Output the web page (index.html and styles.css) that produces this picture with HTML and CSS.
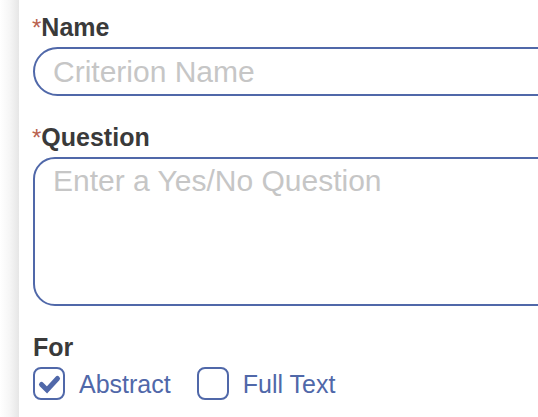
FILE: index.html
```html
<!DOCTYPE html>
<html lang="en">
<head>
<meta charset="utf-8">
<title>Criterion</title>
<link rel="stylesheet" href="styles.css">
</head>
<body>
<div class="page">
  <div class="edge"></div>
  <form class="panel">
    <label class="label" for="name"><span class="req">*</span>Name</label>
    <input id="name" class="input" type="text" placeholder="Criterion Name">

    <label class="label label-gap" for="question"><span class="req">*</span>Question</label>
    <textarea id="question" class="textarea" placeholder="Enter a Yes/No Question"></textarea>

    <div class="label label-gap">For</div>
    <div class="checks">
      <label class="check">
        <span class="box checked">
          <svg viewBox="0 0 32 32" width="32" height="32" aria-hidden="true">
            <polyline points="8.5,17.5 14,23 24.5,11.5" fill="none" stroke="#5068a9" stroke-width="5" stroke-linecap="round" stroke-linejoin="miter"/>
          </svg>
        </span>
        <span class="check-text">Abstract</span>
      </label>
      <label class="check">
        <span class="box"></span>
        <span class="check-text">Full Text</span>
      </label>
    </div>
  </form>
</div>
</body>
</html>
```

FILE: styles.css
```css
html, body {
  margin: 0;
  padding: 0;
  background: #ffffff;
  overflow: hidden;
}

body {
  font-family: "Liberation Sans", Arial, sans-serif;
}

.page {
  display: flex;
  min-height: 417px;
}

.edge {
  width: 19px;
  flex: none;
  background: linear-gradient(to right, #ffffff 0%, #f6f6f6 50%, #e6e6e6 100%);
}

.panel {
  flex: 1;
  display: flex;
  flex-direction: column;
  align-items: flex-start;
  padding: 13px 0 0 14px;
  background: #ffffff;
}

.label {
  display: block;
  font-size: 25px;
  line-height: 28px;
  font-weight: bold;
  color: #3a3a3a;
  margin-bottom: 6px;
}

.label-gap {
  margin-top: 27px;
}

.req {
  color: #b9624f;
  font-weight: normal;
  font-size: 24px;
  line-height: 0;
  margin-left: -1px;
}

.input,
.textarea {
  box-sizing: border-box;
  width: 560px;
  border: 2px solid #5068a9;
  background: #ffffff;
  font-family: "Liberation Sans", Arial, sans-serif;
  font-size: 30px;
  color: #333;
  outline: none;
  margin: 0;
}

.input {
  height: 49px;
  border-radius: 25px;
  padding: 0 18px;
}

.textarea {
  height: 149px;
  border-radius: 22px;
  padding: 5px 18px;
  resize: none;
  line-height: normal;
}

.input::placeholder,
.textarea::placeholder {
  color: #c6c6c6;
  opacity: 1;
}

.checks {
  display: flex;
  align-items: center;
  gap: 26px;
}

.check {
  display: flex;
  align-items: center;
  gap: 14px;
  cursor: pointer;
}

.box {
  box-sizing: border-box;
  width: 32px;
  height: 33px;
  border: 2px solid #5068a9;
  border-radius: 8px;
  display: flex;
  align-items: center;
  justify-content: center;
  position: relative;
}

.box svg {
  position: absolute;
  left: -2px;
  top: -2px;
}

.check-text {
  font-size: 25px;
  line-height: 28px;
  color: #5068a9;
}
```
